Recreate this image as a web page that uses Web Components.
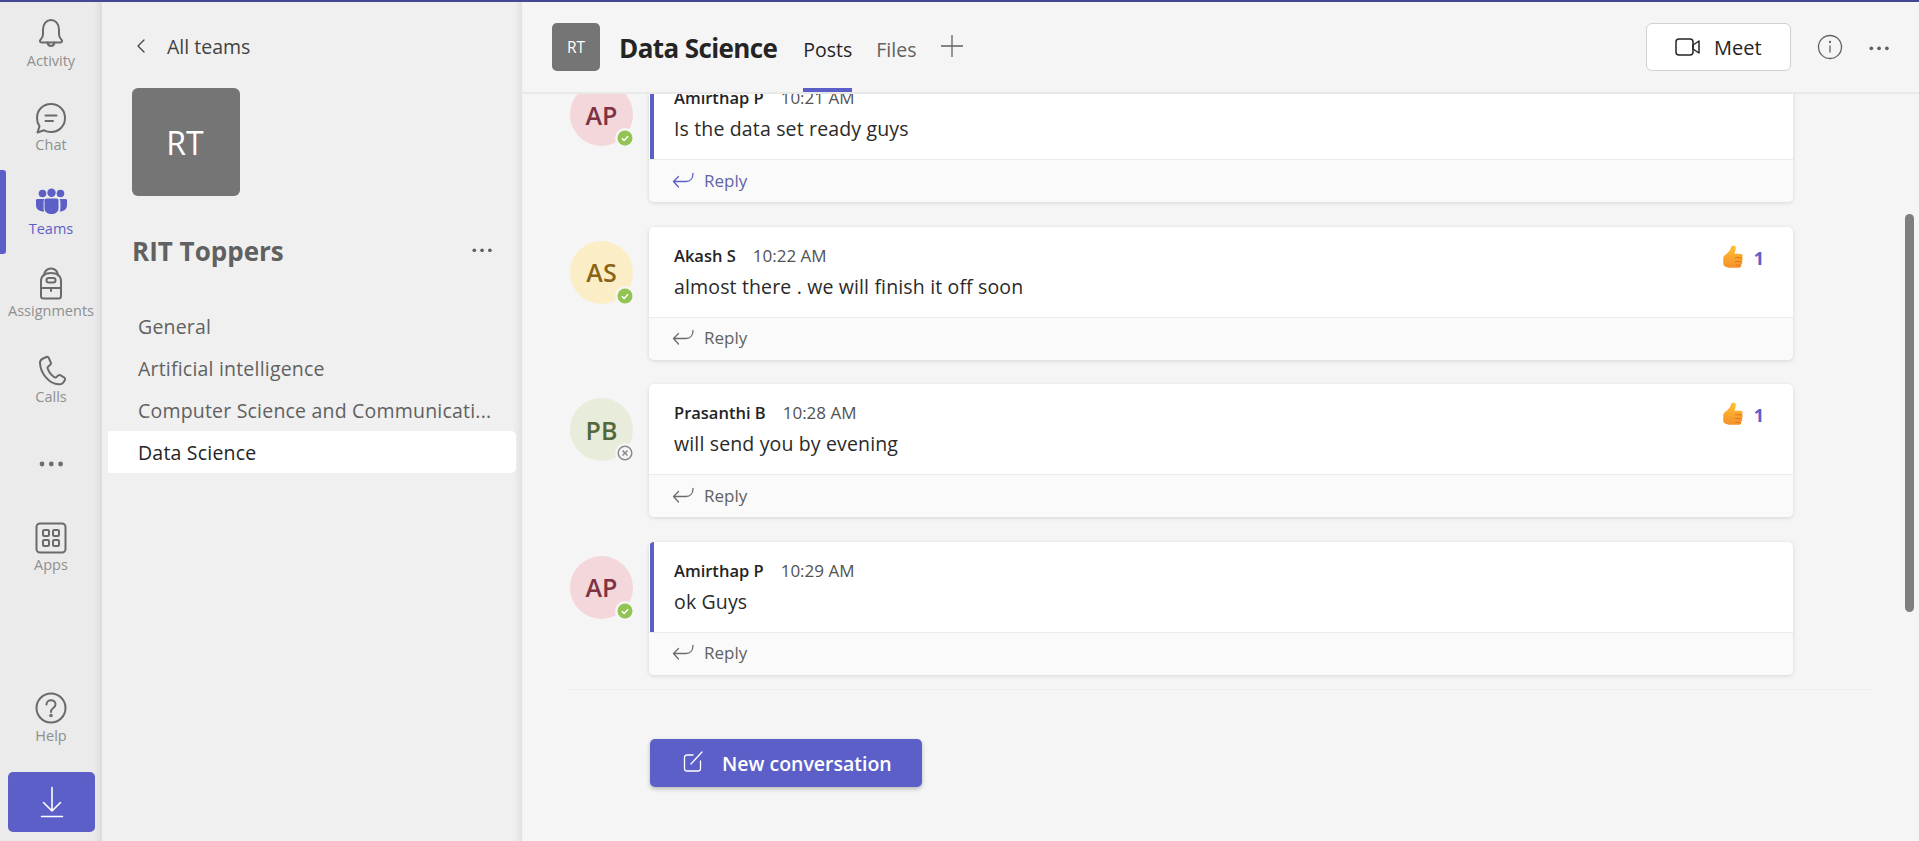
<!DOCTYPE html>
<html>
<head>
<meta charset="utf-8">
<title>Data Science</title>
<style>
  html, body { margin: 0; height: 100%; overflow: hidden; }
  body { font-family: "Open Sans", "Liberation Sans", sans-serif; color: #242424; background: #f5f5f5; }
</style>
</head>
<body>
<teams-app>
  <app-rail slot="rail"></app-rail>
  <team-sidebar slot="sidebar"></team-sidebar>
  <channel-view slot="main"></channel-view>
</teams-app>

<script>
const icons = {
  activity: '<path d="M12.500 26.500h19c1.500 0 2-1.500 1.200-2.500-1.500-1.800-2.700-3-2.700-5.500v-5c0-5.500-3.500-9.500-8-9.500s-8 4-8 9.500v5c0 2.500-1.200 3.700-2.700 5.500-.8 1-.3 2.500 1.200 2.500z"/><path d="M18.500 26.500c.4 2.300 1.800 3.500 3.500 3.500s3.100-1.200 3.500-3.500"/>',
  chat: '<path d="M22 4c8 0 14 6 14 14s-6 14-14 14c-2.500 0-4.900-.6-7-1.700L8.500 32.500l2-6.300C9 24 8 21 8 18 8 10 14 4 22 4z"/><path d="M16.500 15.500h11M16.500 21h7.500"/>',
  pack: '<path d="M15 10.500c0-4 3-7 7-7s7 3 7 7"/><path d="M12 31v-15c0-5 4-8 10-8s10 3 10 8v15c0 1.500-1 2.500-2.500 2.500h-15C13 33.500 12 32.500 12 31z"/><rect x="17.500" y="13" width="9" height="4.500" rx="2.200"/><path d="M12 23h20M22 23v3"/>',
  calls: '<path d="M14 5.500l3.500-1.500c1-.4 1.800 0 2.200.8l2.100 4.700c.4.900.2 1.700-.5 2.300l-2.300 2c-.5.400-.6 1-.4 1.600 1.500 4 3.800 7 7 9 .6.300 1.200.2 1.600-.2l2-1.700c.8-.6 1.600-.7 2.500-.2l3.500 2.200c.9.600 1.100 1.400.7 2.300-1.200 2.800-3.300 4.700-5.900 4.500C20 31.500 11.500 20 11 10c-.1-2 1.200-3.600 3-4.500z"/>',
  apps: '<rect x="7.500" y="3.500" width="29" height="29" rx="3.500"/><rect x="14" y="10" width="6" height="6" rx="1.200"/><rect x="24" y="10" width="6" height="6" rx="1.200"/><rect x="14" y="20" width="6" height="6" rx="1.200"/><rect x="24" y="20" width="6" height="6" rx="1.200"/>',
  help: '<circle cx="22" cy="18" r="14.500"/><path d="M17.500 14.500c0-2.500 2-4.300 4.500-4.300s4.500 1.700 4.500 4c0 2-1.100 3-2.500 4-1.300 1-2 1.700-2 3.800"/><circle cx="22" cy="25.500" r=".8"/>'
}

const teamsIcon = `<circle cx="13.500" cy="9.500" r="3.800"/><circle cx="22.500" cy="8.700" r="4.200"/><circle cx="31.500" cy="9.500" r="3.800"/>
  <path d="M8.500 15h7c-.6 1-.9 2-.9 3.200v6c0 1.200.2 2.300.7 3.300C11.500 27.500 7 26 7 21v-4.500C7 15.600 7.600 15 8.500 15zM29.500 15h7c.9 0 1.500.6 1.500 1.500V21c0 5-4.500 6.500-7.300 6.500.5-1 .7-2.100.7-3.300v-6c0-1.200-.3-2.200-.9-3.200z"/>
  <path d="M17.500 14.500h10c1.200 0 2 .8 2 2V24c0 4-3.200 6-7 6s-7-2-7-6v-7.500c0-1.200.8-2 2-2z"/>`

function dots(color, size = 2.6, gap = 6) {
  return `<svg width="${gap * 2 + size * 2}" height="${size * 2}" viewBox="0 0 ${gap * 2 + size * 2} ${size * 2}" fill="${color}">
    <circle cx="${size}" cy="${size}" r="${size * .8}"/><circle cx="${size + gap}" cy="${size}" r="${size * .8}"/><circle cx="${size + gap * 2}" cy="${size}" r="${size * .8}"/></svg>`
}

class TeamsApp extends HTMLElement {
  constructor() {
    super()
    this.attachShadow({ mode: 'open' }).innerHTML = `
    <style>
      :host { display: flex; flex-direction: column; width: 100vw; height: 100vh; }
      .topline { height: 2px; background: #444791; flex: none; }
      .cols { flex: 1; display: flex; min-height: 0; }
    </style>
    <div class="topline"></div>
    <div class="cols">
      <slot name="rail"></slot>
      <slot name="sidebar"></slot>
      <slot name="main"></slot>
    </div>`
  }
}

class RailItem extends HTMLElement {
  constructor() {
    super()
    const icon = this.getAttribute('icon')
    const glyph = icon === 'teams'
      ? `<svg width="44" height="36" viewBox="0 0 44 36" fill="#5b5fc7">${teamsIcon}</svg>`
      : `<svg width="44" height="36" viewBox="0 0 44 36" fill="none" stroke="#6a6a6a" stroke-width="2" stroke-linecap="round" stroke-linejoin="round">${icons[icon]}</svg>`
    this.attachShadow({ mode: 'open' }).innerHTML = `
    <style>
      :host { display: flex; flex-direction: column; align-items: center; height: 84px; position: relative; color: #8f8f8f; font-size: 14.500px; }
      :host([active]) { color: #5b5fc7; }
      :host([active])::before { content: ''; position: absolute; left: 0; top: 0; bottom: 0; width: 6px; background: #5b5fc7; border-radius: 0 3px 3px 0; }
      svg { display: block; margin-top: var(--icon-top, 14px); }
      .lbl { line-height: 18px; margin-top: var(--lbl-top, 0); white-space: nowrap; }
    </style>
    ${glyph}
    <div class="lbl"><slot></slot></div>`
  }
}

class AppRail extends HTMLElement {
  constructor() {
    super()
    this.attachShadow({ mode: 'open' }).innerHTML = `
    <style>
      :host { display: flex; flex-direction: column; flex: none; width: 102px; background: #ebebeb; box-shadow: inset -9px 0 8px -7px rgba(0,0,0,.1); }
      .dots { height: 84px; display: flex; align-items: center; justify-content: center; }
      .spacer { flex: 1; }
      .dl { height: 60px; margin: 16px 7px 9px 8px; background: #5b5fc7; border-radius: 5px; display: flex; align-items: center; justify-content: center; }
      .help { height: 82px; --icon-top: 16px; --lbl-top: 1px; }
    </style>
    <rail-item icon="activity">Activity</rail-item>
    <rail-item icon="chat">Chat</rail-item>
    <rail-item icon="teams" active>Teams</rail-item>
    <rail-item icon="pack" style="--icon-top:11px;--lbl-top:1px">Assignments</rail-item>
    <rail-item icon="calls" style="--icon-top:15px;--lbl-top:-1px">Calls</rail-item>
    <div class="dots">${dots('#6e6e6e', 3, 9.300)}</div>
    <rail-item icon="apps">Apps</rail-item>
    <div class="spacer"></div>
    <rail-item icon="help" class="help">Help</rail-item>
    <div class="dl">
      <svg width="24" height="32" viewBox="0 0 24 32" fill="none" stroke="#fff" stroke-width="1.600" stroke-linecap="round" stroke-linejoin="round"><path d="M12 1.500v23M3.500 16.500l8.500 8.500 8.500-8.500M1.500 30.500h21"/></svg>
    </div>`
  }
}

class TeamAvatar extends HTMLElement {
  constructor() {
    super()
    this.attachShadow({ mode: 'open' }).innerHTML = `
    <style>
      :host { display: flex; align-items: center; justify-content: center; flex: none; background: #757575; color: #fff; border-radius: var(--r, 6px); width: var(--s, 108px); height: var(--s, 108px); font-size: var(--f, 32px); }
    </style><slot></slot>`
  }
}

class ChannelItem extends HTMLElement {
  constructor() {
    super()
    this.attachShadow({ mode: 'open' }).innerHTML = `
    <style>
      :host { display: block; height: 42px; line-height: 43px; padding: 0 20px 0 30px; color: #616161; font-size: 19.500px; letter-spacing: .2px; border-radius: 0 5px 5px 0; }
      :host([active]) { background: #fff; color: #242424; }
      div { white-space: nowrap; }
    </style><div><slot></slot></div>`
  }
}

class TeamSidebar extends HTMLElement {
  constructor() {
    super()
    this.attachShadow({ mode: 'open' }).innerHTML = `
    <style>
      :host { display: flex; flex-direction: column; flex: none; width: 420px; box-sizing: border-box; background: #f0f0f0; box-shadow: inset -9px 0 8px -7px rgba(0,0,0,.09); }
      .back { display: flex; align-items: center; height: 28px; margin: 30px 0 0 34px; font-size: 19.500px; color: #424242; }
      .back svg { margin-right: 21px; }
      team-avatar { margin: 28px 0 0 30px; padding-right: 2px; box-sizing: border-box; }
      .name { display: flex; align-items: center; justify-content: space-between; margin: 38px 30px 0 30px; height: 36px; }
      .name b { font-size: 26px; font-weight: 700; color: #616161; margin-top: -2px; }
      .name svg { margin-top: -4px; }
      .list { margin-top: 35px; margin-left: 6px; }
      channel-item { margin-right: 6px; }
    </style>
    <div class="back">
      <svg width="10" height="14" viewBox="0 0 10 14" fill="none" stroke="#424242" stroke-width="1.300" stroke-linecap="round" stroke-linejoin="round"><path d="M8 1L2 7l6 6"/></svg>
      <span>All teams</span>
    </div>
    <team-avatar>RT</team-avatar>
    <div class="name"><b>RIT Toppers</b>${dots('#616161', 2.300, 7.800)}</div>
    <div class="list">
      <channel-item>General</channel-item>
      <channel-item>Artificial intelligence</channel-item>
      <channel-item>Computer Science and Communicati...</channel-item>
      <channel-item active>Data Science</channel-item>
    </div>`
  }
}

class UserAvatar extends HTMLElement {
  constructor() {
    super()
    const offline = this.getAttribute('status') === 'off'
    const badge = offline
      ? '<svg width="20" height="20" viewBox="0 0 20 20"><circle cx="10" cy="10" r="10" fill="#f5f5f5"/><circle cx="10" cy="10" r="6.800" fill="#f5f5f5" stroke="#8a8a8a" stroke-width="1.500"/><path d="M7.500 7.500l5 5M12.500 7.500l-5 5" stroke="#8a8a8a" stroke-width="1.500"/></svg>'
      : '<svg width="20" height="20" viewBox="0 0 20 20"><circle cx="10" cy="10" r="10" fill="#f5f5f5"/><circle cx="10" cy="10" r="7.500" fill="#92c353"/><path d="M6.800 10.200l2.300 2.200 4-4.200" fill="none" stroke="#fff" stroke-width="1.500"/></svg>'
    this.attachShadow({ mode: 'open' }).innerHTML = `
    <style>
      :host { display: flex; flex: none; align-items: center; justify-content: center; position: relative; width: 63px; height: 63px; border-radius: 50%; background: var(--bg); color: var(--fg); font-size: 25px; font-weight: 600; margin-top: 14px; }
      svg { position: absolute; right: -2px; bottom: -2px; }
    </style><slot></slot>${badge}`
  }
}

class MessageCard extends HTMLElement {
  constructor() {
    super()
    const mine = this.hasAttribute('mine')
    const liked = this.hasAttribute('liked')
    const replyColor = this.hasAttribute('hot') ? '#5b5fc7' : '#6b6b6b'
    const thumb = `<div class="like">
      <svg width="25" height="28" viewBox="0 0 24 26">
        <defs><linearGradient id="t" x1="0" y1="0" x2="0" y2="1"><stop offset="0" stop-color="#ffc131"/><stop offset="1" stop-color="#f4902c"/></linearGradient></defs>
        <path fill="url(#t)" d="M9.500 1.500c1.500-1.200 3.600-.4 3.700 1.600.1 2.300-.7 4.200-1.300 5.900h5.600c2.600 0 2.900 2.700 1.700 3.600 1.200.9 1 2.900-.2 3.500.9 1 .6 2.800-.7 3.300.6 1.200-.1 3-1.900 3H8c-2.500 0-3.500-.8-5-1.300-1-.4-1.800-1.300-1.800-2.800v-5c0-1.700.7-2.700 2-3.500 2-1.400 4.800-4.100 5.400-6.700.2-1 .1-1.200.9-1.600z"/>
        <path d="M12.500 12.800h6.500M12.500 16.400h6M13 20h4.800" stroke="#d9691c" stroke-width="1" fill="none" opacity=".8"/>
      </svg><b>1</b></div>`
    this.attachShadow({ mode: 'open' }).innerHTML = `
    <style>
      :host { display: flex; gap: 16px; padding-left: 48px; padding-right: 126px; }
      .card { flex: 1; height: 133px; display: flex; flex-direction: column; background: #fff; border-radius: 5px; box-shadow: 0 1px 4px rgba(0,0,0,.13); position: relative; overflow: hidden; }
      .card.mine::before { content: ''; position: absolute; left: 1px; top: 0; width: 4px; height: 91px; background: #5b5fc7; }
      .body { height: 91px; box-sizing: border-box; padding: 18px 25px 0 25px; border-bottom: 1px solid #ebebeb; position: relative; }
      .meta { display: flex; gap: 17px; align-items: baseline; font-size: 16.500px; line-height: 22px; }
      .meta b { font-weight: 600; color: #242424; }
      .meta span { color: #525252; font-size: 17px; }
      .text { font-size: 19.500px; line-height: 26px; margin-top: 7px; color: #2a2a2a; letter-spacing: .15px; }
      .reply { flex: 1; display: flex; align-items: center; gap: 10px; padding: 0 0 2px 23px; background: #fafafa; font-size: 17px; color: ${this.hasAttribute('hot') ? '#6264a7' : '#616161'}; }
      .like { position: absolute; right: 29px; top: 17px; display: flex; align-items: center; gap: 7px; }
      .like b { color: #5b5fc7; font-size: 18px; font-weight: 700; }
    </style>
    <div class="av"><slot name="avatar"></slot></div>
    <div class="card ${mine ? 'mine' : ''}">
      <div class="body">
        <div class="meta"><b>${this.getAttribute('who')}</b><span>${this.getAttribute('time')}</span></div>
        <div class="text"><slot></slot></div>
        ${liked ? thumb : ''}
      </div>
      <div class="reply">
        <svg width="22" height="17" viewBox="0 0 22 17" fill="none" stroke="${replyColor}" stroke-width="1.300" stroke-linecap="round" stroke-linejoin="round"><path d="M21 1.500c0 4.500-2.500 8-7 8H1.500M6.500 4.500l-5 5 5 5.500"/></svg>
        <span>Reply</span>
      </div>
    </div>`
  }
}

class ChannelHeader extends HTMLElement {
  constructor() {
    super()
    this.attachShadow({ mode: 'open' }).innerHTML = `
    <style>
      :host { display: flex; align-items: center; flex: none; height: 92px; box-sizing: border-box; padding: 0 30px 0 30px; background: #f5f5f5; border-bottom: 2px solid #e9e9e9; position: relative; z-index: 2; }
      team-avatar { --s: 48px; --f: 15.500px; --r: 5px; }
      h1 { font-size: 26px; font-weight: 700; margin: 2px 0 0 19px; letter-spacing: -.6px; color: #242424; white-space: nowrap; }
      .tabs { display: flex; align-self: stretch; margin-left: 26px; gap: 24px; }
      .tab { display: flex; align-items: center; padding-top: 9px; font-size: 19.500px; color: #616161; box-sizing: border-box; border-bottom: 4px solid transparent; }
      .tab.on { color: #242424; font-weight: 500; border-bottom-color: #5b5fc7; }
      .plus { margin-left: 24px; margin-top: -3px; }
      .spacer { flex: 1; }
      .meet { display: flex; align-items: center; justify-content: center; gap: 13px; width: 145px; height: 48px; box-sizing: border-box; background: #fff; border: 1px solid #d1d1d1; border-radius: 6px; font-size: 20px; font-weight: 500; color: #242424; }
      .info { margin-left: 26px; }
      .more { margin-left: 26px; margin-top: -4px; }
    </style>
    <team-avatar>RT</team-avatar>
    <h1>Data Science</h1>
    <div class="tabs">
      <div class="tab on">Posts</div>
      <div class="tab">Files</div>
    </div>
    <svg class="plus" width="24" height="24" viewBox="0 0 24 24" stroke="#616161" stroke-width="1.300" fill="none"><path d="M12 1v22M1 12h22"/></svg>
    <div class="spacer"></div>
    <div class="meet">
      <svg width="26" height="20" viewBox="0 0 26 20" fill="none" stroke="#242424" stroke-width="1.500" stroke-linejoin="round"><rect x="1" y="2" width="17" height="16" rx="3"/><path d="M18 8l6-4v12l-6-4z"/></svg>
      <span>Meet</span>
    </div>
    <svg class="info" width="26" height="26" viewBox="0 0 26 26" fill="none" stroke="#616161" stroke-width="1.300"><circle cx="13" cy="13" r="11.500"/><path d="M13 11.500v7"/><circle cx="13" cy="8" r=".5"/></svg>
    <div class="more">${dots('#616161', 2.300, 7.800)}</div>`
  }
}

class ChannelView extends HTMLElement {
  constructor() {
    super()
    this.attachShadow({ mode: 'open' }).innerHTML = `
    <style>
      :host { display: flex; flex-direction: column; flex: 1; min-width: 0; background: #f5f5f5; position: relative; }
      .scroll { flex: 1; overflow: hidden; min-height: 0; }
      .list { display: flex; flex-direction: column; gap: 24.500px; margin-top: -25px; }
      .avatar-ap { --bg: #f4d7da; --fg: #7d3344; }
      .avatar-as { --bg: #fbeec6; --fg: #8a6416; }
      .avatar-pb { --bg: #e7ecdb; --fg: #55683c; }
      hr { border: none; height: 1px; background: #ededed; margin: 14px 49px 0 48px; }
      .new { display: flex; align-items: center; gap: 19px; width: 272px; height: 48px; margin: 49px 0 0 128px; box-sizing: border-box; padding: 2px 0 0 33px; background: #5b5fc7; color: #fff; border-radius: 5px; font-size: 19.500px; font-weight: 600; box-shadow: 0 2px 4px rgba(0,0,0,.25); }
      .new svg { margin-top: -4px; }
      .bar { position: absolute; right: 5px; top: 212px; width: 9px; height: 398px; background: #7f7f7f; border-radius: 5px; }
    </style>
    <channel-header></channel-header>
    <div class="scroll">
      <div class="list">
        <message-card mine hot who="Amirthap P" time="10:21 AM"><user-avatar slot="avatar" class="avatar-ap">AP</user-avatar>Is the data set ready guys</message-card>
        <message-card liked who="Akash S" time="10:22 AM"><user-avatar slot="avatar" class="avatar-as">AS</user-avatar>almost there . we will finish it off soon</message-card>
        <message-card liked who="Prasanthi B" time="10:28 AM"><user-avatar slot="avatar" status="off" class="avatar-pb">PB</user-avatar>will send you by evening</message-card>
        <message-card mine who="Amirthap P" time="10:29 AM"><user-avatar slot="avatar" class="avatar-ap">AP</user-avatar>ok Guys</message-card>
      </div>
      <hr>
      <div class="new">
        <svg width="20" height="21" viewBox="0 0 20 21" fill="none" stroke="#fff" stroke-width="1.300" stroke-linecap="round" stroke-linejoin="round"><path d="M10 4H4C2.500 4 1.500 5 1.500 6.500v11C1.500 19 2.500 20 4 20h11c1.500 0 2.500-1 2.500-2.500V10M8 13L19 1"/></svg>
        <span>New conversation</span>
      </div>
    </div>
    <div class="bar"></div>`
  }
}

customElements.define('team-avatar', TeamAvatar)
customElements.define('rail-item', RailItem)
customElements.define('app-rail', AppRail)
customElements.define('channel-item', ChannelItem)
customElements.define('team-sidebar', TeamSidebar)
customElements.define('user-avatar', UserAvatar)
customElements.define('message-card', MessageCard)
customElements.define('channel-header', ChannelHeader)
customElements.define('channel-view', ChannelView)
customElements.define('teams-app', TeamsApp)
</script>
</body>
</html>
